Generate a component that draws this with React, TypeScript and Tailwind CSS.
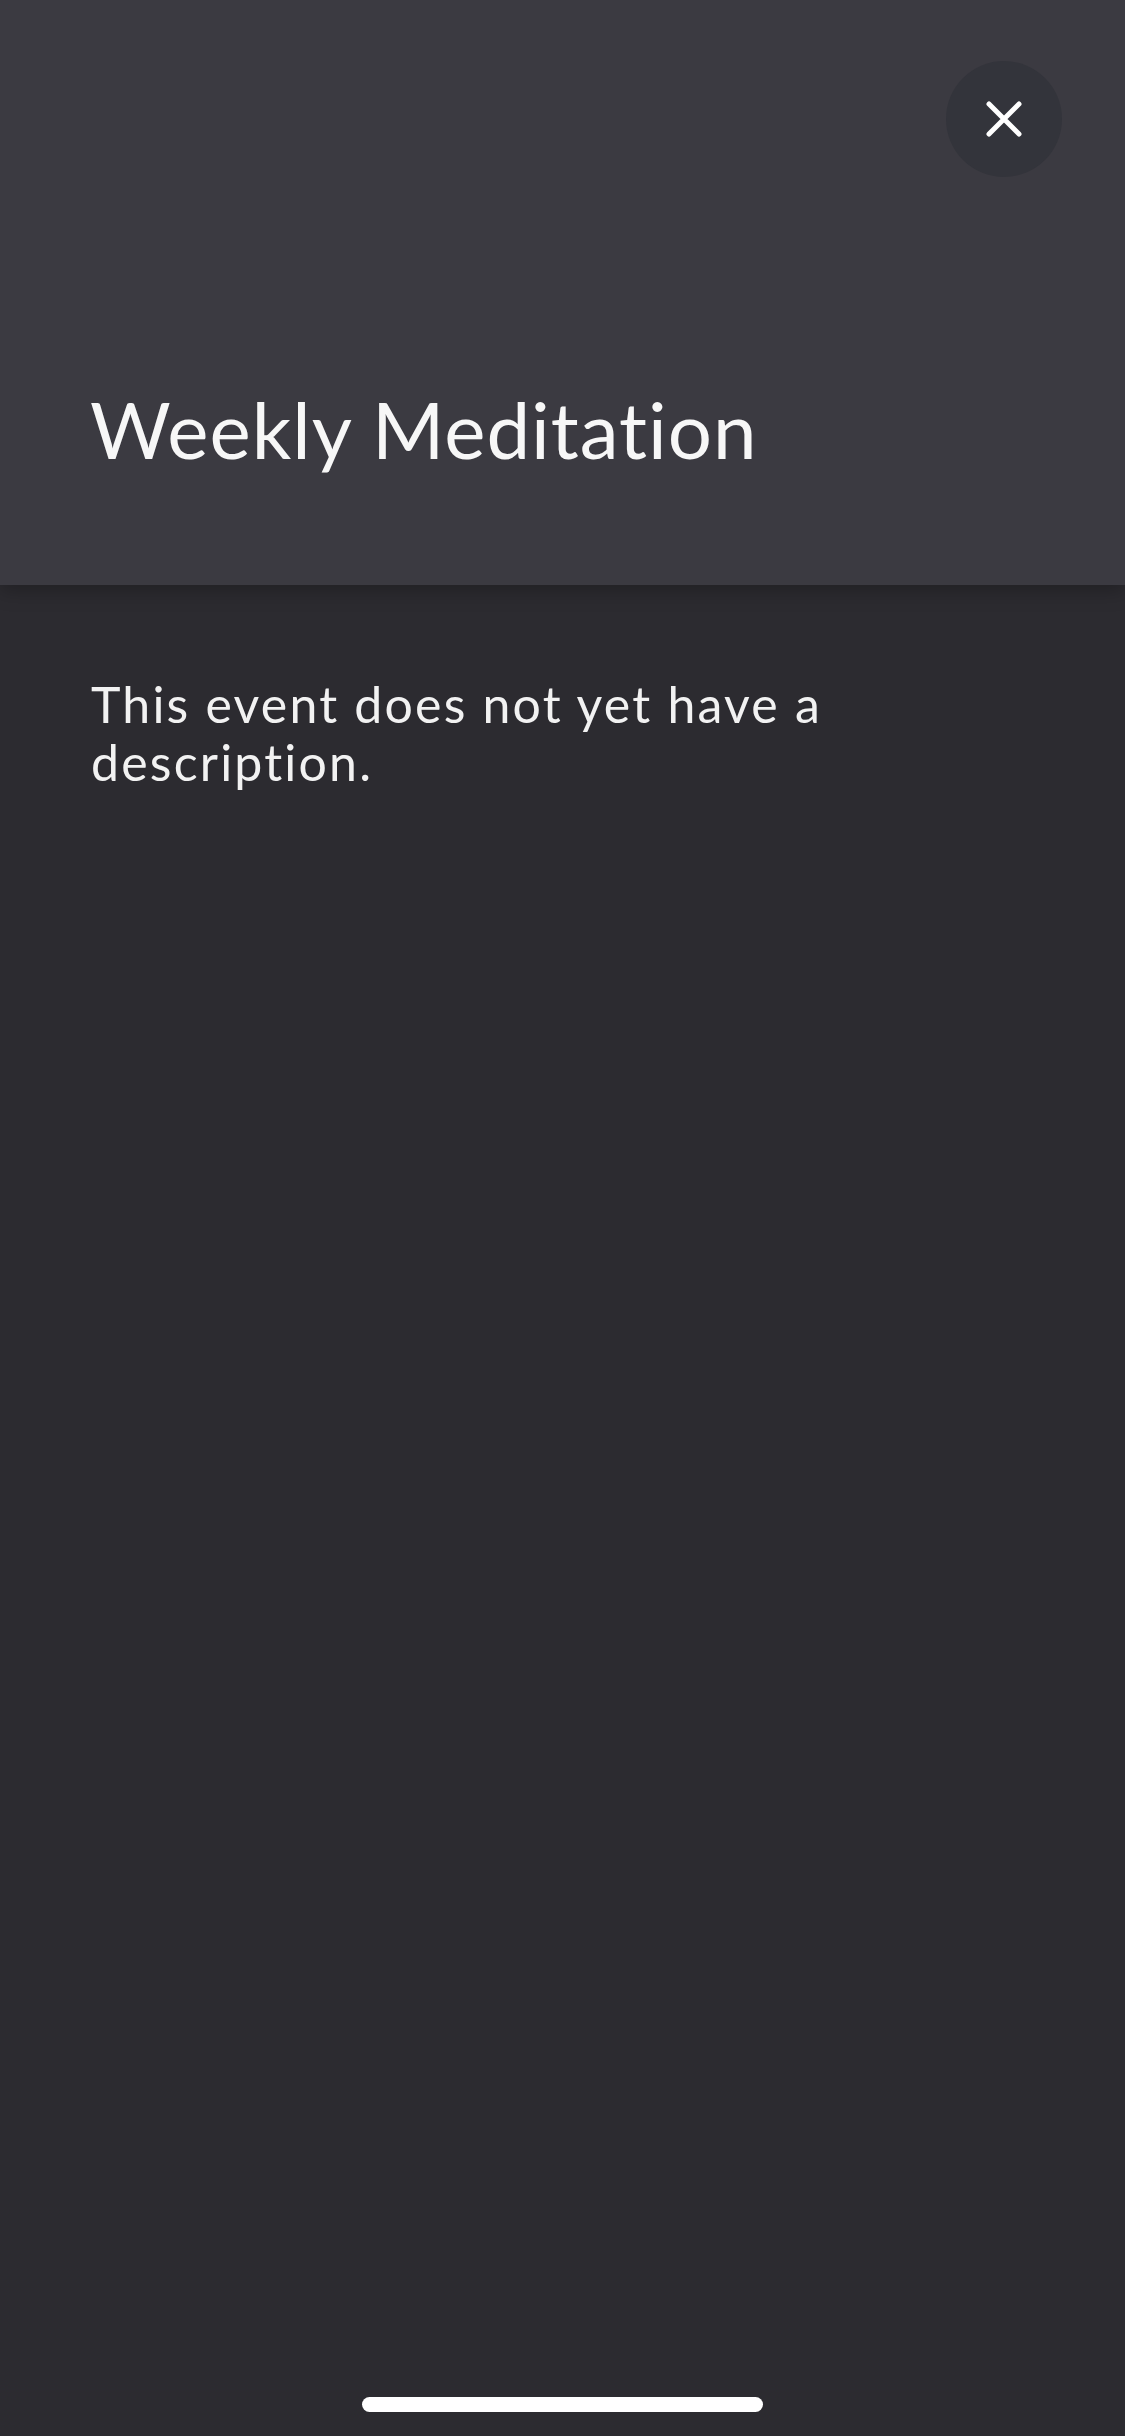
import React from "react";

export default function App() {
  return (
    <div
      className="w-[1125px] h-[2436px] bg-[#2c2b30] flex flex-col relative overflow-hidden"
      style={{ fontFamily: "Lato, 'Open Sans', sans-serif" }}
    >
      <header className="h-[585px] bg-[#3b3a41] flex flex-col relative z-10 shadow-[0_6px_18px_rgba(0,0,0,0.25)]">
        <div className="flex justify-end pt-[61px] pr-[63px]">
          <button className="w-[116px] h-[116px] rounded-full bg-[#33343b] flex items-center justify-center">
            <svg width="36" height="36" viewBox="0 0 36 36" fill="none">
              <path d="M3 3L33 33M33 3L3 33" stroke="#ffffff" strokeWidth="5" strokeLinecap="round" />
            </svg>
          </button>
        </div>
        <h1 className="mt-[204px] pl-[90px] text-[78px] leading-[96px] text-[#f7f7f7] font-normal tracking-[1px]">
          Weekly Meditation
        </h1>
      </header>
      <main className="flex-1 px-[91px] pt-[90px]">
        <p className="text-[50px] leading-[58px] text-[#f2f2f2] font-normal tracking-[2.2px]">
          This event does not yet have a<br />description.
        </p>
      </main>
      <div className="flex justify-center pb-[24px]">
        <div className="w-[401px] h-[15px] rounded-full bg-white" />
      </div>
    </div>
  );
}
